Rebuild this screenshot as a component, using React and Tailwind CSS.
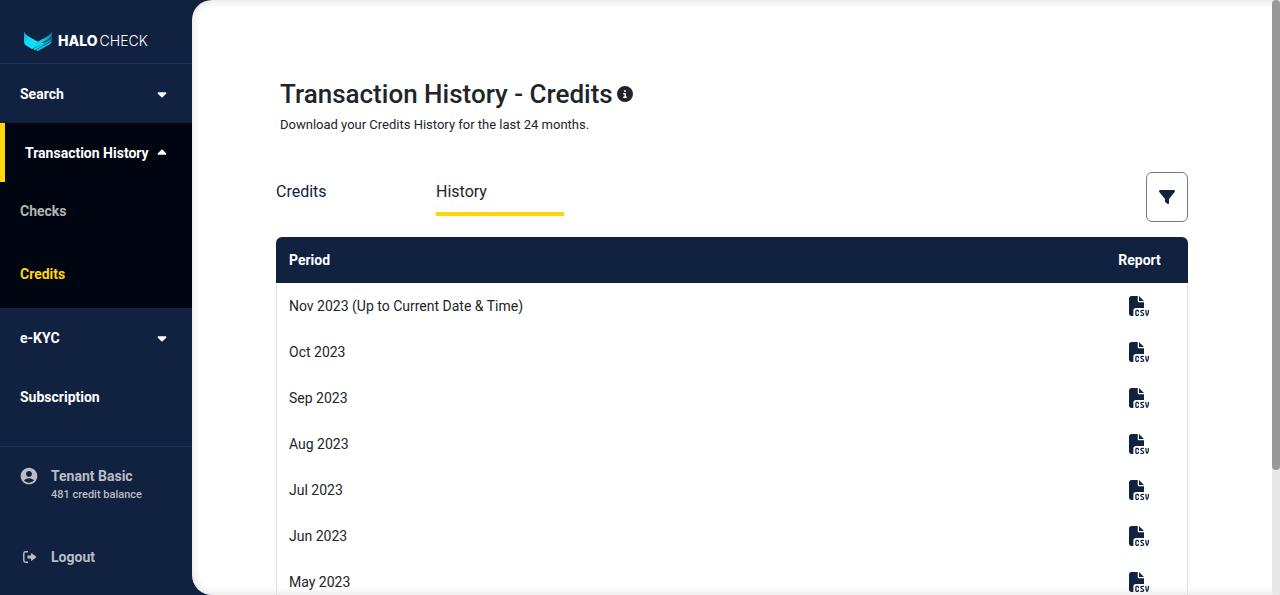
import { FaFileCsv, FaFilter, FaCircleInfo, FaCaretDown, FaCaretUp } from "react-icons/fa6";
import { MdAccountCircle } from "react-icons/md";

const months = [
  "Nov 2023 (Up to Current Date & Time)",
  "Oct 2023",
  "Sep 2023",
  "Aug 2023",
  "Jul 2023",
  "Jun 2023",
  "May 2023",
];

function LogoMark() {
  return (
    <svg viewBox="0 0 28 20" className="h-5 w-7 shrink-0" aria-hidden="true">
      <defs>
        <linearGradient id="left-wing" x1="0" y1="0" x2="1" y2="0.6">
          <stop offset="0" stopColor="#1593b8" />
          <stop offset="0.35" stopColor="#0fdcf6" />
          <stop offset="1" stopColor="#08e6ff" />
        </linearGradient>
        <linearGradient id="right-wing" x1="0" y1="1" x2="1" y2="0">
          <stop offset="0" stopColor="#08e6ff" />
          <stop offset="0.5" stopColor="#13c3e4" />
          <stop offset="1" stopColor="#17678f" />
        </linearGradient>
      </defs>
      <path d="M0 0.5 Q1 3.5 5 5.7 L14 10.8 L20 12 L8 18 L2.5 14.8 Q0 13.3 0 11 Z" fill="url(#left-wing)" />
      <path d="M14 10.6 L23 5.4 Q27 3.1 28 0.8 V4.6 Q27 6.8 24 8.5 L8.2 17.2 L7 14.8 Z" fill="url(#right-wing)" />
      <path d="M9 17.9 L24 9.5 Q27 7.8 28 5.8 V8 Q27 10 24.5 11.5 L11 18.9 Z" fill="url(#right-wing)" />
      <path d="M11.6 19 L24.5 12.2 Q27 10.8 28 9 Q28 12 25 13.8 L13.8 20 Z" fill="#0fc9e8" />
    </svg>
  );
}

function LogoutIcon() {
  return (
    <svg viewBox="0 0 14 12" className="h-3 w-3.5 shrink-0" aria-hidden="true">
      <path d="M5 0.8 H2.5 Q0.8 0.8 0.8 2.5 V9.5 Q0.8 11.2 2.5 11.2 H5" fill="none" stroke="currentColor" strokeWidth="1.4" />
      <path d="M4.9 4.5 H8 V2.4 Q8 1.7 8.6 2.2 L13.1 5.6 Q13.5 6 13.1 6.4 L8.6 9.8 Q8 10.3 8 9.6 V7.5 H4.9 Q4.4 7.5 4.4 7 V5 Q4.4 4.5 4.9 4.5 Z" fill="currentColor" />
    </svg>
  );
}

export default function App() {
  return (
    <div className="flex h-screen overflow-hidden bg-[#112240] font-[Roboto,sans-serif] text-[#212529]">
      <aside className="flex w-48 shrink-0 flex-col text-sm font-bold text-white">
        <a href="#home" className="flex h-16 items-end gap-1.5 border-b border-[#1b3260] px-6 pb-3">
          <LogoMark />
          <span className="flex gap-0.5 font-[Inter,sans-serif] text-sm leading-5">
            <span className="font-extrabold">HALO</span>
            <span className="font-light">CHECK</span>
          </span>
        </a>
        <nav aria-label="Main">
          <button className="flex h-[59px] w-full items-center justify-between pr-[23px] pl-5">
            Search
            <FaCaretDown className="size-3.5" />
          </button>
          <div className="bg-[#000611]">
            <button className="flex h-[59px] w-full items-center justify-between border-l-[5px] border-[#ffd60a] pr-[23px] pl-5">
              Transaction History
              <FaCaretUp className="size-3.5" />
            </button>
            <a href="#checks" className="flex h-[58px] items-center px-5 text-[#b3b3b3]">Checks</a>
            <a href="#credits" className="flex h-[68px] items-center px-5 text-[#ffd60a]">Credits</a>
          </div>
          <button className="flex h-[59px] w-full items-center justify-between pr-[23px] pl-5">
            e-KYC
            <FaCaretDown className="size-3.5" />
          </button>
          <a href="#subscription" className="flex h-[59px] items-center px-5">Subscription</a>
        </nav>
        <div className="mt-5 flex flex-1 flex-col justify-between border-t border-[#1b3260] px-[19px] pt-[19px] pb-7 text-[#b8bdc6]">
          <div className="flex gap-3">
            <MdAccountCircle className="size-5 shrink-0" />
            <div>
              <p className="leading-5">Tenant Basic</p>
              <p className="text-[11px] leading-[18px] font-medium">481 credit balance</p>
            </div>
          </div>
          <a href="#logout" className="flex items-center gap-3.5 pl-1 leading-5">
            <LogoutIcon />
            Logout
          </a>
        </div>
      </aside>

      <main className="flex min-w-0 flex-1 overflow-hidden rounded-l-[20px] bg-white shadow-[inset_0_0_10px_rgba(0,0,0,0.15)]">
        <div className="min-w-0 flex-1 px-[84px] pt-[78px]">
          <header className="px-1">
            <h1 className="flex items-center gap-1 text-[26px] leading-8 font-medium">
              Transaction History - Credits
              <FaCircleInfo className="size-4" />
            </h1>
            <p className="mt-[3px] text-[13px] leading-6">Download your Credits History for the last 24 months.</p>
          </header>
          <div className="mt-[35px] flex items-start justify-between">
            <div role="tablist" className="flex gap-8 text-base">
              <button role="tab" aria-selected="false" className="h-11 w-32 border-b-4 border-transparent text-left text-[#112240]">Credits</button>
              <button role="tab" aria-selected="true" className="h-11 w-32 border-b-4 border-[#ffd60a] text-left">History</button>
            </div>
            <button aria-label="Filter" className="flex h-[50px] w-[42px] items-center justify-center rounded-md border border-[#707a8c] text-[#112240]">
              <FaFilter className="size-4" />
            </button>
          </div>
          <div className="mt-[15px] overflow-hidden rounded-t-md">
            <table className="w-full border-separate border-spacing-0 text-left text-sm">
              <thead className="bg-[#112240] text-white">
                <tr className="h-[46px]">
                  <th className="px-[13px] font-bold">Period</th>
                  <th className="w-[97px] text-center font-bold">Report</th>
                </tr>
              </thead>
              <tbody>
                {months.map((month) => (
                  <tr key={month} className="h-[46px]">
                    <td className="border-l border-[#dee2e6] px-3">{month}</td>
                    <td className="border-r border-[#dee2e6]">
                      <button aria-label={"Download CSV for " + month} className="mx-auto block text-[#112240]">
                        <FaFileCsv className="size-5" />
                      </button>
                    </td>
                  </tr>
                ))}
              </tbody>
            </table>
          </div>
        </div>
        <div className="w-2 shrink-0 rounded-full bg-[#e8e8e8]" aria-hidden="true">
          <div className="h-[79%] rounded-full bg-[#999999]" />
        </div>
      </main>
    </div>
  );
}
